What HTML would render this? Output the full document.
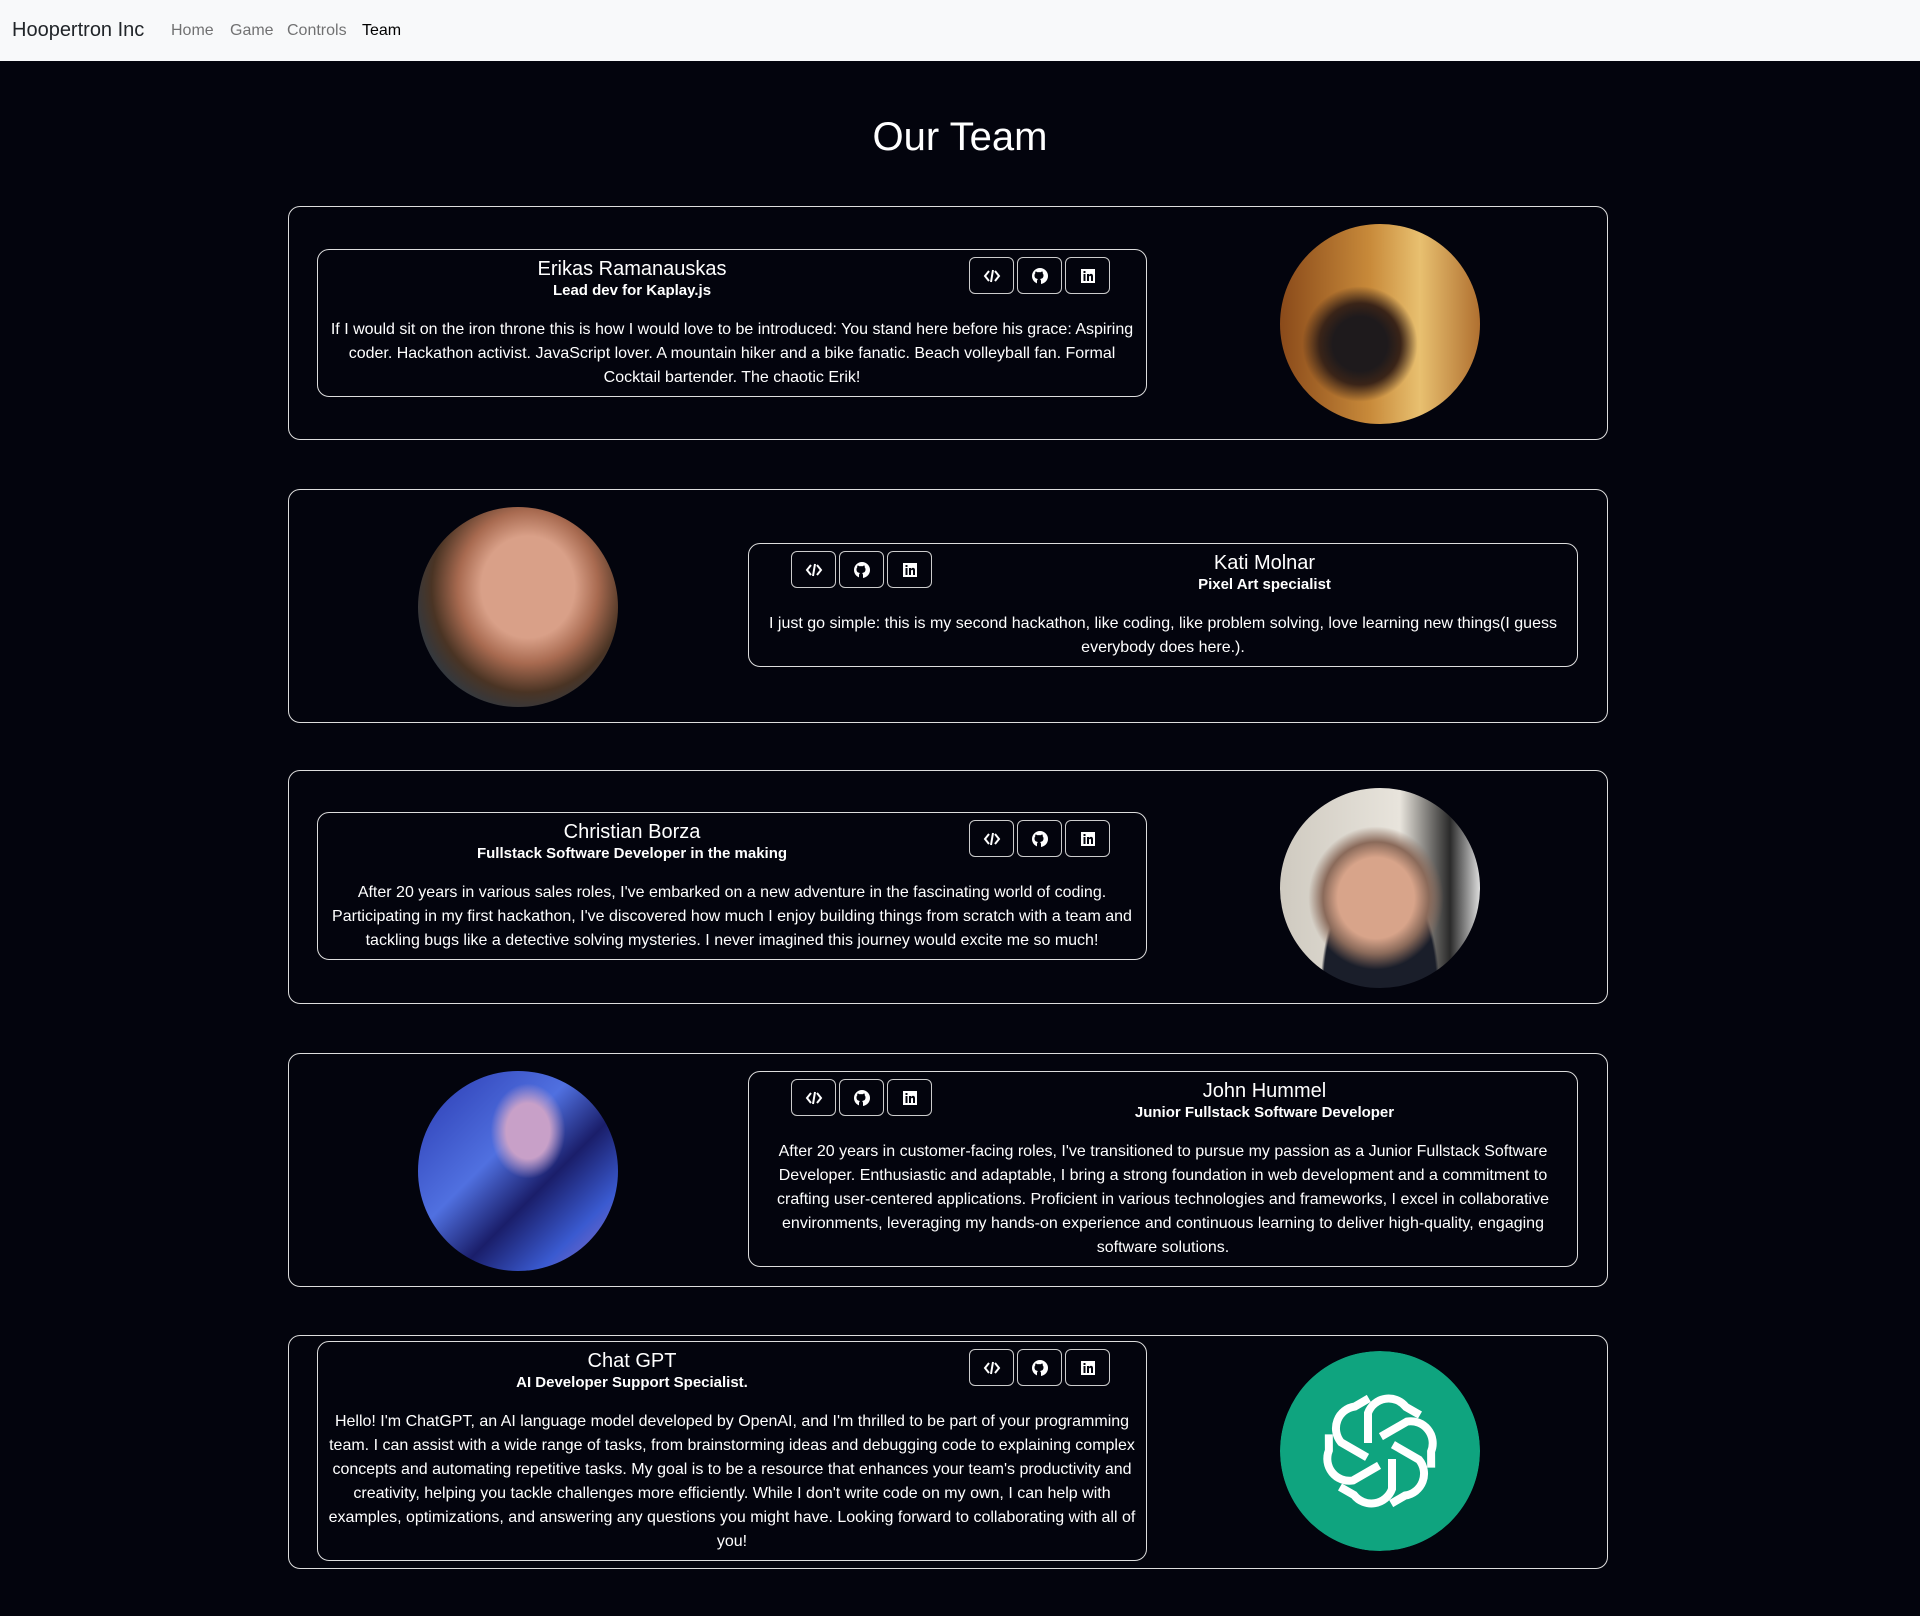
<!DOCTYPE html>
<html><head><meta charset="utf-8"><style>
*{box-sizing:border-box;margin:0;padding:0}
body{width:1920px;height:1616px;background:#03040d;font-family:"Liberation Sans",sans-serif;color:#fff;position:relative;overflow:hidden}
nav{position:absolute;left:0;top:0;width:1920px;height:61px;background:#f8f9fa}
.brand{position:absolute;left:12px;top:19px;font-size:20px;color:#212529}
.lnk{position:absolute;top:22px;font-size:16px;color:rgba(0,0,0,.55)}
h1{position:absolute;top:115px;width:1920px;text-align:center;font-size:40px;font-weight:500}
.card{position:absolute;left:288px;width:1320px;height:234px;border:1.5px solid #ddd;border-radius:12px}
.box{position:absolute;width:830px;border:1.5px solid #ddd;border-radius:12px;padding:7px 8px 6px}
.hdr{display:flex;align-items:flex-start;height:48px}
.nm{text-align:center}
.nm b{display:block;font-size:20px;font-weight:500;line-height:24px}
.nm i{display:block;font-style:normal;font-weight:bold;font-size:15px;line-height:19px}
.btns{display:flex;gap:3px}
.btn{width:45px;height:37px;border:1.5px solid #ccc;border-radius:6px;display:flex;align-items:center;justify-content:center}
p{text-align:center;font-size:16px;line-height:24px;margin-top:13px}
.img{position:absolute;width:200px;height:200px;border-radius:50%;top:17px}
</style></head><body>
<nav><span class="brand">Hoopertron Inc</span><span class="lnk" style="left:171px">Home</span><span class="lnk" style="left:230px">Game</span><span class="lnk" style="left:287px">Controls</span><span class="lnk" style="left:362px;color:#000">Team</span></nav>
<h1>Our Team</h1>

<svg width="0" height="0" style="position:absolute"><defs>
<g id="code"><path d="M6 4L2 9l4 5M12 4l4 5-4 5M10 3L8 15" stroke="#fff" stroke-width="2" fill="none"/></g>
<g id="gh"><circle cx="9" cy="9" r="8" fill="#fff"/><path d="M6 17v-3c0-1 .5-1.5 1-2-2-.3-3.5-1-3.5-3.5 0-1 .3-1.6.8-2.1-.1-.5-.1-1.2.2-1.9.8 0 1.5.4 2 .8a6 6 0 0 1 3 0c.5-.4 1.2-.8 2-.8.3.7.3 1.4.2 1.9.5.5.8 1.1.8 2.1 0 2.5-1.5 3.200-3.5 3.5.5.5 1 1 1 2v3z" fill="#03040d"/></g>
<g id="li"><rect x="2" y="2" width="14" height="14" fill="#fff"/><rect x="4.5" y="7" width="2" height="7" fill="#03040d"/><rect x="4.5" y="4" width="2" height="2" fill="#03040d"/><path d="M8 7h2v1c.5-.8 1.3-1.1 2-1.1 1.5 0 2 1 2 2.5V14h-2v-4c0-.8-.3-1.2-.9-1.2S10 9.3 10 10v4H8z" fill="#03040d"/></g>
</defs></svg>

<!-- card 1 -->
<div class="card" style="top:206px">
 <div class="box" style="left:28px;top:42px">
  <div class="hdr"><div class="nm" style="width:612px"><b>Erikas Ramanauskas</b><i>Lead dev for Kaplay.js</i></div>
  <div class="btns" style="margin-left:31px"><div class="btn"><svg width="18" height="18"><use href="#code"/></svg></div><div class="btn"><svg width="18" height="18"><use href="#gh"/></svg></div><div class="btn"><svg width="18" height="18"><use href="#li"/></svg></div></div></div>
  <p>If I would sit on the iron throne this is how I would love to be introduced: You stand here before his grace: Aspiring coder. Hackathon activist. JavaScript lover. A mountain hiker and a bike fanatic. Beach volleyball fan. Formal Cocktail bartender. The chaotic Erik!</p>
 </div>
 <div class="img" style="left:991px;background:radial-gradient(ellipse at 40% 60%,#1e1a1c 0 16%,#3a2418 24%,transparent 34%),linear-gradient(90deg,#8a4a1a,#c88a3a 45%,#e8c070 70%,#b07030)"></div>
</div>

<!-- card 2 -->
<div class="card" style="top:489px">
 <div class="img" style="left:129px;background:radial-gradient(ellipse at 55% 40%,#d9a088 0 30%,#a86a50 45%,#4a3424 62%,#2a3a4a 80%)"></div>
 <div class="box" style="left:459px;top:53px">
  <div class="hdr"><div class="btns" style="margin-left:34px"><div class="btn"><svg width="18" height="18"><use href="#code"/></svg></div><div class="btn"><svg width="18" height="18"><use href="#gh"/></svg></div><div class="btn"><svg width="18" height="18"><use href="#li"/></svg></div></div>
  <div class="nm" style="width:612px;margin-left:28px"><b>Kati Molnar</b><i>Pixel Art specialist</i></div></div>
  <p>I just go simple: this is my second hackathon, like coding, like problem solving, love learning new things(I guess everybody does here.).</p>
 </div>
</div>

<!-- card 3 -->
<div class="card" style="top:770px">
 <div class="box" style="left:28px;top:41px">
  <div class="hdr"><div class="nm" style="width:612px"><b>Christian Borza</b><i>Fullstack Software Developer in the making</i></div>
  <div class="btns" style="margin-left:31px"><div class="btn"><svg width="18" height="18"><use href="#code"/></svg></div><div class="btn"><svg width="18" height="18"><use href="#gh"/></svg></div><div class="btn"><svg width="18" height="18"><use href="#li"/></svg></div></div></div>
  <p>After 20 years in various sales roles, I've embarked on a new adventure in the fascinating world of coding. Participating in my first hackathon, I've discovered how much I enjoy building things from scratch with a team and tackling bugs like a detective solving mysteries. I never imagined this journey would excite me so much!</p>
 </div>
 <div class="img" style="left:991px;background:radial-gradient(ellipse at 48% 55%,#d8a48a 0 26%,#8a6a5a 36%,transparent 46%),radial-gradient(ellipse at 50% 100%,#1a1e2a 0 40%,transparent 42%),linear-gradient(90deg,#cfcac0,#e8e4dc 60%,#2a2a2a 85%,#ddd)"></div>
</div>

<!-- card 4 -->
<div class="card" style="top:1053px">
 <div class="img" style="left:129px;background:radial-gradient(ellipse at 55% 30%,#c8a0c8 0 14%,transparent 24%),linear-gradient(135deg,#2a3ab0,#5070e0 40%,#1a1e6a 60%,#3a5ad0 80%,#a070c0)"></div>
 <div class="box" style="left:459px;top:17px">
  <div class="hdr"><div class="btns" style="margin-left:34px"><div class="btn"><svg width="18" height="18"><use href="#code"/></svg></div><div class="btn"><svg width="18" height="18"><use href="#gh"/></svg></div><div class="btn"><svg width="18" height="18"><use href="#li"/></svg></div></div>
  <div class="nm" style="width:612px;margin-left:28px"><b>John Hummel</b><i>Junior Fullstack Software Developer</i></div></div>
  <p>After 20 years in customer-facing roles, I've transitioned to pursue my passion as a Junior Fullstack Software Developer. Enthusiastic and adaptable, I bring a strong foundation in web development and a commitment to crafting user-centered applications. Proficient in various technologies and frameworks, I excel in collaborative environments, leveraging my hands-on experience and continuous learning to deliver high-quality, engaging software solutions.</p>
 </div>
</div>

<!-- card 5 -->
<div class="card" style="top:1335px">
 <div class="box" style="left:28px;top:5px">
  <div class="hdr"><div class="nm" style="width:612px"><b>Chat GPT</b><i>AI Developer Support Specialist.</i></div>
  <div class="btns" style="margin-left:31px"><div class="btn"><svg width="18" height="18"><use href="#code"/></svg></div><div class="btn"><svg width="18" height="18"><use href="#gh"/></svg></div><div class="btn"><svg width="18" height="18"><use href="#li"/></svg></div></div></div>
  <p>Hello! I'm ChatGPT, an AI language model developed by OpenAI, and I'm thrilled to be part of your programming team. I can assist with a wide range of tasks, from brainstorming ideas and debugging code to explaining complex concepts and automating repetitive tasks. My goal is to be a resource that enhances your team's productivity and creativity, helping you tackle challenges more efficiently. While I don't write code on my own, I can help with examples, optimizations, and answering any questions you might have. Looking forward to collaborating with all of you!</p>
 </div>
 <svg class="img" style="left:991px;top:15px" width="200" height="200" viewBox="0 0 200 200">
  <circle cx="100" cy="100" r="100" fill="#0fa47f"/>
  <g fill="none" stroke="#fff" stroke-width="8" transform="translate(100,100)">
   <path d="M-12 -8 V-38 A22 22 0 0 1 26 -44 L40 -36"/>
   <path transform="rotate(60)" d="M-12 -8 V-38 A22 22 0 0 1 26 -44 L40 -36"/>
   <path transform="rotate(120)" d="M-12 -8 V-38 A22 22 0 0 1 26 -44 L40 -36"/>
   <path transform="rotate(180)" d="M-12 -8 V-38 A22 22 0 0 1 26 -44 L40 -36"/>
   <path transform="rotate(240)" d="M-12 -8 V-38 A22 22 0 0 1 26 -44 L40 -36"/>
   <path transform="rotate(300)" d="M-12 -8 V-38 A22 22 0 0 1 26 -44 L40 -36"/>
  </g>
 </svg>
</div>
</body></html>
